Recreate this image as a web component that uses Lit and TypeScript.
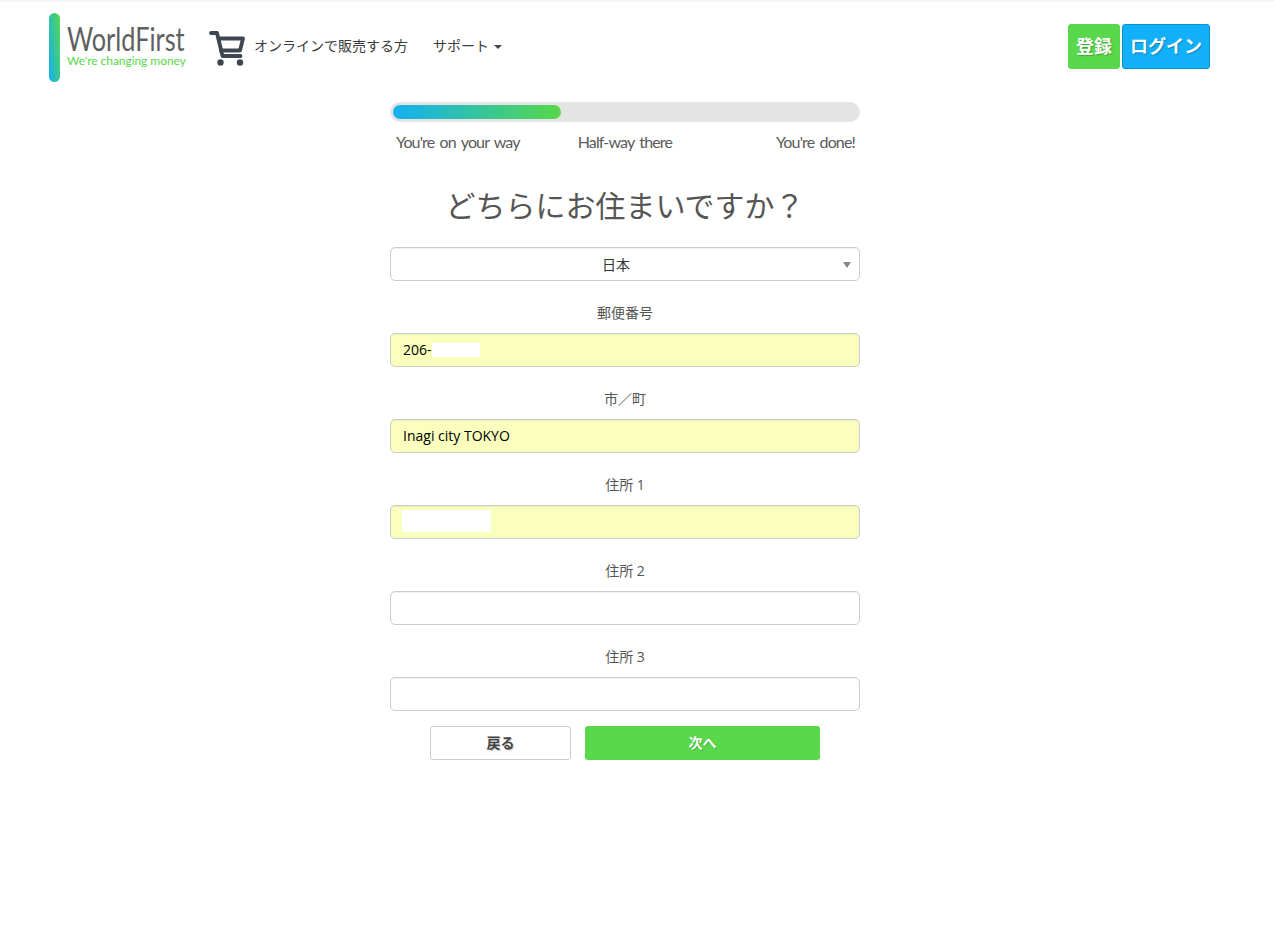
import { LitElement, html, css } from "lit";
import { customElement } from "lit/decorators.js";

@customElement("app-root")
export class AppRoot extends LitElement {
  static styles = css`
    :host { display: block; min-height: 942px; background: #fff; font-family: "Open Sans", "Noto Sans CJK JP", sans-serif; color: #444; box-sizing: border-box; border-top: 2px solid #f3f5f7; }
    * { box-sizing: border-box; }
    header { display: flex; align-items: flex-start; height: 90px; padding: 11px 64px 0 49px; }
    .bar { width: 11px; height: 69px; border-radius: 6px; background: linear-gradient(84deg, #12b0f2, #58d84a); flex: none; }
    .logo { margin-left: 7px; width: 119px; display: flex; flex-direction: column; padding-top: 13px; }
    .wf { font-family: Lato, sans-serif; font-weight: 400; font-size: 32px; line-height: 26px; color: #5f6062; white-space: nowrap; transform: scaleX(.79); transform-origin: left center; }
    .tag { font-family: Lato, sans-serif; font-size: 12px; line-height: 14px; margin-top: 2px; color: #58d84a; white-space: nowrap; letter-spacing: -0.05px; }
    .cart { margin-left: 23px; margin-top: 17px; flex: none; display: block; }
    .nav { font-size: 14px; line-height: 20px; color: #3c3c3c; margin-top: 23px; white-space: nowrap; }
    .n1 { margin-left: 9px; width: 154px; }
    .n2 { margin-left: 25px; display: flex; align-items: center; }
    .caret { margin-left: 5px; margin-top: 2px; width: 0; height: 0; border-left: 4px solid transparent; border-right: 4px solid transparent; border-top: 4px solid #444; }
    .auth { margin-left: auto; display: flex; gap: 2px; margin-top: 11px; }
    .btn { height: 45px; padding-bottom: 3px; display: flex; align-items: center; justify-content: center; border-radius: 3px; color: #fff; font-weight: 700; font-size: 18px; text-shadow: 1px 1px 1px rgba(0,0,0,.25); }
    .reg { width: 52px; background: #58d84a; border: 1px solid #58d84a; }
    .login { width: 88px; background: #12b0f8; border: 1px solid #0a93cc; }
    main { width: 470px; margin-left: 390px; display: flex; flex-direction: column; padding-top: 10px; }
    .track { height: 20px; border-radius: 10px; background: #e4e4e4; padding: 3px; }
    .fill { width: 168px; height: 14px; border-radius: 7px; background: linear-gradient(90deg, #12b0f2, #58d84a); }
    .steps { display: flex; padding: 0 5px 0 6px; margin-top: 9px; font-family: Lato, sans-serif; font-size: 16px; line-height: 22px; color: #5a5a5a; font-weight: 400; }
    .steps span { white-space: nowrap; word-spacing: 2px; letter-spacing: -0.85px; }
    .steps .mid { margin-left: 58px; }
    .steps .end { margin-left: auto; }
    h1 { margin: 33px 0 0; font-weight: 400; font-size: 30px; line-height: 42px; text-align: center; color: #555; font-family: "Liberation Sans", "Noto Sans CJK JP", sans-serif; }
    .select { position: relative; margin-top: 19px; height: 34px; padding-right: 18px; border: 1px solid #ccc; border-radius: 5px; display: flex; align-items: center; justify-content: center; font-size: 14px; color: #333; box-shadow: inset 0 1px 1px rgba(0,0,0,.06); }
    .arrow { position: absolute; right: 8px; top: 14px; width: 0; height: 0; border-left: 4px solid transparent; border-right: 4px solid transparent; border-top: 6px solid #888; }
    label { display: block; height: 20px; margin-top: 22px; margin-bottom: 10px; text-align: center; font-size: 14px; line-height: 20px; color: #555; }
    .input { height: 34px; border: 1px solid #ccc; border-radius: 5px; padding: 0 12px 1px; display: flex; align-items: center; font-size: 14px; color: #000; box-shadow: inset 0 1px 1px rgba(0,0,0,.06); }
    .filled { background: #faffbd; }
    .m1 { width: 48px; height: 14px; background: #fff; }
    .m2 { width: 89px; height: 22px; margin-left: -1px; margin-top: -1px; background: #fff; }
    .actions { display: flex; margin-top: 15px; padding-left: 40px; gap: 14px; }
    .act { height: 34px; padding-bottom: 2px; border-radius: 3px; display: flex; align-items: center; justify-content: center; font-size: 14px; font-weight: 700; }
    .back { width: 141px; border: 1px solid #ccc; color: #444; background: #fff; text-shadow: 1px 1px 1px rgba(0,0,0,.25); }
    .next { width: 235px; background: #58d84a; color: #fff; text-shadow: 1px 1px 1px rgba(0,0,0,.2); }
  `;

  render() {
    return html`
      <header>
        <div class="bar"></div>
        <div class="logo">
          <div class="wf">WorldFirst</div>
          <div class="tag">We're changing money</div>
        </div>
        <svg class="cart" width="36" height="36" viewBox="0 0 36 36" fill="none" stroke="#3d4752" stroke-width="3.8" stroke-linejoin="round" stroke-linecap="round">
          <path d="M2 3H8L13.5 26H31.5" />
          <path d="M9.5 8.5H34L31 20.5H12" />
          <circle cx="11.5" cy="32.5" r="3.2" fill="#3d4752" stroke="none" />
          <circle cx="31" cy="32.5" r="3.2" fill="#3d4752" stroke="none" />
        </svg>
        <div class="nav n1">オンラインで販売する方</div>
        <div class="nav n2">サポート<span class="caret"></span></div>
        <div class="auth">
          <div class="btn reg">登録</div>
          <div class="btn login">ログイン</div>
        </div>
      </header>
      <main>
        <div class="track"><div class="fill"></div></div>
        <div class="steps"><span>You're on your way</span><span class="mid">Half-way there</span><span class="end">You're done!</span></div>
        <h1>どちらにお住まいですか？</h1>
        <div class="select">日本<span class="arrow"></span></div>
        <label>郵便番号</label>
        <div class="input filled">206-<span class="m1"></span></div>
        <label>市／町</label>
        <div class="input filled">Inagi city TOKYO</div>
        <label>住所 1</label>
        <div class="input filled"><span class="m2"></span></div>
        <label>住所 2</label>
        <div class="input"></div>
        <label>住所 3</label>
        <div class="input"></div>
        <div class="actions">
          <div class="act back">戻る</div>
          <div class="act next">次へ</div>
        </div>
      </main>
    `;
  }
}
